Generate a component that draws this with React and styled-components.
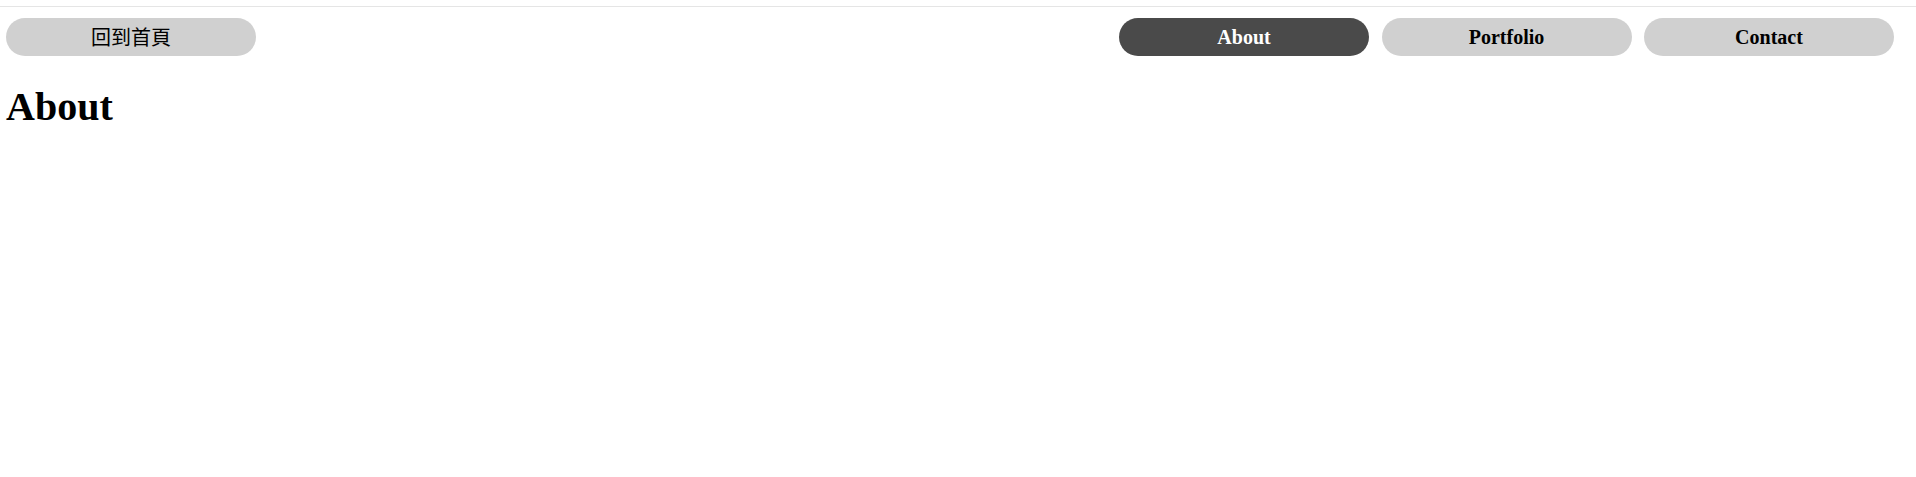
import React from "react";
import styled, { createGlobalStyle } from "styled-components";

const GlobalStyle = createGlobalStyle`
  body {
    margin: 0;
    background: #ffffff;
    font-family: "Liberation Serif", "Noto Sans CJK TC", serif;
  }
`;

const Page = styled.div`
  width: 100%;
`;

const TopLine = styled.div`
  height: 1px;
  margin-top: 6px;
  background-color: #e5e5e5;
`;

const Nav = styled.nav`
  display: flex;
  justify-content: space-between;
  align-items: center;
  margin-top: 11px;
  padding: 0 22px 0 6px;
`;

const Links = styled.div`
  display: flex;
  gap: 12.5px;
`;

const PillButton = styled.button`
  width: 250px;
  height: 38px;
  border: none;
  border-radius: 19px;
  padding: 0;
  cursor: pointer;
  background-color: ${(p) => (p.$active ? "#4a4a4a" : "#d0d0d0")};
  color: ${(p) => (p.$active ? "#ffffff" : "#000000")};
  font-family: ${(p) =>
    p.$cjk
      ? '"Noto Sans CJK TC", "Noto Sans", sans-serif'
      : '"Liberation Serif", "Times New Roman", serif'};
  font-size: 20px;
  font-weight: ${(p) => (p.$cjk ? 400 : 700)};
  line-height: 38px;
  text-align: center;
`;

const Title = styled.h1`
  margin: 27px 0 0 6px;
  font-family: "Liberation Serif", "Times New Roman", serif;
  font-size: 40px;
  font-weight: 700;
  line-height: normal;
  color: #000;
`;

const links = ["About", "Portfolio", "Contact"];

export default function App() {
  return (
    <Page>
      <GlobalStyle />
      <TopLine />
      <Nav>
        <PillButton $cjk>回到首頁</PillButton>
        <Links>
          {links.map((name) => (
            <PillButton key={name} $active={name === "About"}>
              {name}
            </PillButton>
          ))}
        </Links>
      </Nav>
      <Title>About</Title>
    </Page>
  );
}
